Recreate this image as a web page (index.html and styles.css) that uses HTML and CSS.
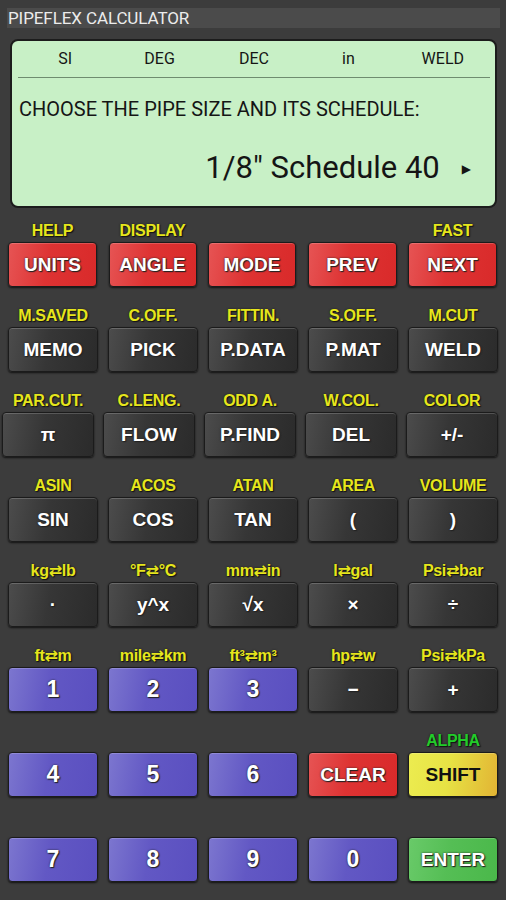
FILE: index.html
```html
<!DOCTYPE html>
<html>
<head>
    <title>PipeFlex Calculator</title>
    <link rel="stylesheet" href="styles.css">
</head>
<body>
    <div class="app">
        <div class="titlebar">PIPEFLEX CALCULATOR</div>

        <!-- display -->
        <div class="lcd">
            <div class="lcd-status">
                <span>SI</span>
                <span>DEG</span>
                <span>DEC</span>
                <span>in</span>
                <span>WELD</span>
            </div>
            <div class="lcd-prompt">CHOOSE THE PIPE SIZE AND ITS SCHEDULE:</div>
            <div class="lcd-value">1/8" Schedule 40<span class="arrow">&#9654;</span></div>
        </div>

        <!-- keys -->
        <div class="keypad">
            <div class="row row-top">
                <div class="key"><span class="alt">HELP</span><button class="btn red">UNITS</button></div>
                <div class="key"><span class="alt">DISPLAY</span><button class="btn red">ANGLE</button></div>
                <div class="key"><span class="alt"></span><button class="btn red">MODE</button></div>
                <div class="key"><span class="alt"></span><button class="btn red">PREV</button></div>
                <div class="key"><span class="alt">FAST</span><button class="btn red">NEXT</button></div>
            </div>
            <div class="row">
                <div class="key"><span class="alt">M.SAVED</span><button class="btn dark">MEMO</button></div>
                <div class="key"><span class="alt">C.OFF.</span><button class="btn dark">PICK</button></div>
                <div class="key"><span class="alt">FITTIN.</span><button class="btn dark">P.DATA</button></div>
                <div class="key"><span class="alt">S.OFF.</span><button class="btn dark">P.MAT</button></div>
                <div class="key"><span class="alt">M.CUT</span><button class="btn dark">WELD</button></div>
            </div>
            <div class="row row-wide">
                <div class="key"><span class="alt">PAR.CUT.</span><button class="btn dark">&pi;</button></div>
                <div class="key"><span class="alt">C.LENG.</span><button class="btn dark">FLOW</button></div>
                <div class="key"><span class="alt">ODD A.</span><button class="btn dark">P.FIND</button></div>
                <div class="key"><span class="alt">W.COL.</span><button class="btn dark">DEL</button></div>
                <div class="key"><span class="alt">COLOR</span><button class="btn dark">+/-</button></div>
            </div>
            <div class="row">
                <div class="key"><span class="alt">ASIN</span><button class="btn dark">SIN</button></div>
                <div class="key"><span class="alt">ACOS</span><button class="btn dark">COS</button></div>
                <div class="key"><span class="alt">ATAN</span><button class="btn dark">TAN</button></div>
                <div class="key"><span class="alt">AREA</span><button class="btn dark">(</button></div>
                <div class="key"><span class="alt">VOLUME</span><button class="btn dark">)</button></div>
            </div>
            <div class="row">
                <div class="key"><span class="alt">kg&#8644;lb</span><button class="btn dark">&middot;</button></div>
                <div class="key"><span class="alt">&deg;F&#8644;&deg;C</span><button class="btn dark">y^x</button></div>
                <div class="key"><span class="alt">mm&#8644;in</span><button class="btn dark">&radic;x</button></div>
                <div class="key"><span class="alt">l&#8644;gal</span><button class="btn dark">&times;</button></div>
                <div class="key"><span class="alt">Psi&#8644;bar</span><button class="btn dark">&divide;</button></div>
            </div>
            <div class="row">
                <div class="key"><span class="alt">ft&#8644;m</span><button class="btn blue num">1</button></div>
                <div class="key"><span class="alt">mile&#8644;km</span><button class="btn blue num">2</button></div>
                <div class="key"><span class="alt">ft&sup3;&#8644;m&sup3;</span><button class="btn blue num">3</button></div>
                <div class="key"><span class="alt">hp&#8644;w</span><button class="btn dark">&minus;</button></div>
                <div class="key"><span class="alt">Psi&#8644;kPa</span><button class="btn dark">+</button></div>
            </div>
            <div class="row">
                <div class="key"><span class="alt"></span><button class="btn blue num">4</button></div>
                <div class="key"><span class="alt"></span><button class="btn blue num">5</button></div>
                <div class="key"><span class="alt"></span><button class="btn blue num">6</button></div>
                <div class="key"><span class="alt"></span><button class="btn red">CLEAR</button></div>
                <div class="key"><span class="alt green">ALPHA</span><button class="btn yellow">SHIFT</button></div>
            </div>
            <div class="row">
                <div class="key"><span class="alt"></span><button class="btn blue num">7</button></div>
                <div class="key"><span class="alt"></span><button class="btn blue num">8</button></div>
                <div class="key"><span class="alt"></span><button class="btn blue num">9</button></div>
                <div class="key"><span class="alt"></span><button class="btn blue num">0</button></div>
                <div class="key"><span class="alt"></span><button class="btn green-btn">ENTER</button></div>
            </div>
        </div>
    </div>
</body>
</html>
```

FILE: styles.css
```css
body {
    margin: 0;
    padding: 0;
    background-color: #3c3c3c;
    font-family: Roboto, 'Liberation Sans', sans-serif;
}

.app {
    width: 506px;
    height: 900px;
    overflow: hidden;
}

.titlebar {
    margin: 8px 6px 0 7px;
    height: 20px;
    line-height: 21px;
    padding-left: 1px;
    background-color: #4b4b4b;
    color: #ececec;
    font-size: 17px;
    letter-spacing: -0.1px;
}

/* green display */
.lcd {
    margin: 11px 9px 0 10px;
    height: 165px;
    padding: 0 5px 0 6px;
    background-color: #c8f0c6;
    border: 2px solid #1c1c1c;
    border-radius: 8px;
    color: #151515;
}

.lcd-status {
    display: grid;
    grid-template-columns: repeat(5, 1fr);
    height: 36px;
    line-height: 36px;
    border-bottom: 1px solid #6f8c6f;
    text-align: center;
    font-size: 16px;
}

.lcd-prompt {
    margin-top: 19px;
    line-height: 24px;
    padding-left: 1px;
    font-size: 20px;
}

.lcd-value {
    margin-top: 27px;
    line-height: 40px;
    text-align: right;
    padding-right: 19px;
    font-size: 31px;
}

.lcd-value .arrow {
    font-family: 'DejaVu Sans', sans-serif;
    font-size: 12px;
    margin-left: 22px;
    vertical-align: 5px;
}

/* keypad */
.keypad {
    margin-top: 12px;
}

.row {
    display: grid;
    grid-template-columns: repeat(5, 90px);
    column-gap: 10px;
    padding-left: 8px;
    height: 85px;
}

.row-top {
    grid-template-columns: 89px 88px 88px 89px 89px;
    justify-content: space-between;
    padding-right: 9px;
}

.row-wide {
    grid-template-columns: repeat(5, 92px);
    column-gap: 9px;
    padding-left: 2px;
}

.key {
    display: flex;
    flex-direction: column;
}

.alt {
    height: 20px;
    line-height: 21px;
    margin-bottom: 2px;
    text-align: center;
    font-family: 'Liberation Sans', 'DejaVu Sans', sans-serif;
    font-weight: bold;
    font-size: 16px;
    letter-spacing: -0.3px;
    color: #e6e61c;
    text-shadow: 0 0 2px #1a1a1a, 1px 1px 1px #111;
    white-space: nowrap;
}

.alt.green {
    color: #22cc2a;
}

.btn {
    height: 45px;
    padding: 0;
    border: 1px solid #1b1b1b;
    border-radius: 4px;
    font-family: 'Liberation Sans', 'DejaVu Sans', sans-serif;
    font-weight: bold;
    font-size: 19px;
    color: #fff;
    text-shadow: 0 0 2px #222, 1px 1px 1px #222;
    box-shadow: 0 1px 2px rgba(0,0,0,0.7), inset 0 1px 0 rgba(255,255,255,0.18);
}

.btn.num {
    font-size: 23px;
}

.red {
    background: linear-gradient(100deg, #e65454 0%, #de3333 45%, #d92a2a 100%);
}

.dark {
    background: linear-gradient(100deg, #4c4c4c 0%, #363636 45%, #2b2b2b 100%);
}

.blue {
    background: linear-gradient(100deg, #7c76cf 0%, #6258c4 45%, #5a4fc0 100%);
}

.yellow {
    background: linear-gradient(100deg, #ecec50 0%, #e7e244 45%, #e2b434 100%);
    color: #111;
    text-shadow: none;
}

.green-btn {
    background: linear-gradient(100deg, #69ca69 0%, #55be55 45%, #4ab84a 100%);
}
```
